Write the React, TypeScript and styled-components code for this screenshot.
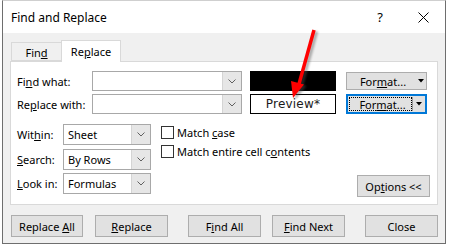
import React from 'react';
import styled, { createGlobalStyle } from 'styled-components';

const GlobalStyle = createGlobalStyle`
    html, body {
        margin: 0;
        padding: 0;
        background: #fff;
    }
    body {
        font-family: "Noto Sans", "Open Sans", sans-serif;
        font-size: 11px;
        color: #000;
    }
`;

const Page = styled.div`
    position: relative;
    width: 451px;
    height: 248px;
`;

const Window = styled.div`
    box-sizing: border-box;
    width: 444px;
    height: 244px;
    margin-left: 2px;
    border: 1px solid #6e6e6e;
    border-top-color: #cfcfcf;
    display: flex;
    flex-direction: column;
    background: #f0f0f0;
`;

const TitleBar = styled.div`
    height: 32px;
    background: #fff;
    display: flex;
    align-items: center;
    padding: 0 16px 0 8px;
`;

const Title = styled.div`
    flex: 1;
    font-size: 12px;
    color: #000;
`;

const TitleButtons = styled.div`
    display: flex;
    align-items: center;
    gap: 35px;
`;

const HelpGlyph = styled.span`
    font-size: 13px;
    line-height: 1;
`;

const Body = styled.div`
    flex: 1;
    display: flex;
    flex-direction: column;
    padding: 7px 7px 6px 7px;
`;

const TabRow = styled.div`
    display: flex;
    align-items: flex-end;
    height: 21px;
    padding-left: 1px;
    position: relative;
    z-index: 1;
`;

const Tab = styled.div<{ $active?: boolean }>`
    box-sizing: border-box;
    height: ${({ $active }) => ($active ? '22px' : '19px')};
    margin-bottom: ${({ $active }) => ($active ? '-1px' : '0')};
    width: ${({ $active }) => ($active ? '60px' : '50px')};
    display: flex;
    align-items: center;
    justify-content: center;
    border: 1px solid #d9d9d9;
    border-bottom: ${({ $active }) => ($active ? 'none' : '1px solid #d9d9d9')};
    border-right: ${({ $active }) => ($active ? '1px solid #d9d9d9' : 'none')};
    background: ${({ $active }) => ($active ? '#fff' : '#f0f0f0')};
    padding-top: ${({ $active }) => ($active ? '0' : '1px')};
`;

const Panel = styled.div`
    box-sizing: border-box;
    height: 144px;
    background: #fff;
    border: 1px solid #d9d9d9;
    padding: 9px 7px 8px 6px;
    display: flex;
    flex-direction: column;
`;

const TopGrid = styled.div`
    display: grid;
    grid-template-columns: 67px 150px 86px 83px;
    grid-template-rows: 20px 20px;
    column-gap: 8px;
    row-gap: 3px;
    align-items: center;
`;

const Label = styled.div`
    white-space: nowrap;
`;

const Key = styled.span`
    text-decoration: underline;
    text-underline-offset: 1px;
`;

const Combo = styled.div`
    box-sizing: border-box;
    height: 100%;
    display: flex;
    border: 1px solid #a8a8a8;
    background: #fff;
`;

const ComboText = styled.div`
    flex: 1;
    display: flex;
    align-items: center;
    padding-left: 4px;
    white-space: nowrap;
`;

const ComboArrow = styled.div`
    width: 18px;
    display: flex;
    align-items: center;
    justify-content: center;
    background: #e6e6e6;
    border-left: 1px solid #d4d4d4;
`;

const Swatch = styled.div`
    height: 20px;
    background: #000;
`;

const Preview = styled.div`
    box-sizing: border-box;
    height: 20px;
    border: 1px solid #000;
    display: flex;
    align-items: center;
    justify-content: center;
    font-family: "DejaVu Sans", "Noto Sans", sans-serif;
    font-size: 12px;
    color: #1a1a1a;
    letter-spacing: 0.2px;
`;

const FormatButton = styled.div<{ $focused?: boolean }>`
    box-sizing: border-box;
    height: ${({ $focused }) => ($focused ? '20px' : '18px')};
    margin-left: 2px;
    display: flex;
    align-items: stretch;
    background: #e1e1e1;
    border: ${({ $focused }) => ($focused ? '2px solid #0078d7' : '1px solid #adadad')};
    padding: ${({ $focused }) => ($focused ? '1px' : '0')};
`;

const FormatLabel = styled.div<{ $focused?: boolean }>`
    flex: 1;
    display: flex;
    align-items: center;
    justify-content: center;
    padding-left: 4px;
    border: ${({ $focused }) => ($focused ? '1px dotted #000' : '1px solid transparent')};
`;

const FormatDrop = styled.div<{ $focused?: boolean }>`
    width: 11px;
    display: flex;
    align-items: center;
    justify-content: center;
    border-left: ${({ $focused }) => ($focused ? '1px solid #9a9a9a' : 'none')};
`;

const LowerSection = styled.div`
    margin-top: 10px;
    display: flex;
    flex: 1;
`;

const SelectGrid = styled.div`
    display: grid;
    grid-template-columns: 46px 88px;
    grid-template-rows: 21px 21px 21px;
    row-gap: 3.5px;
    align-items: center;
`;

const CheckList = styled.div`
    margin-left: 10px;
    padding-top: 2px;
    display: flex;
    flex-direction: column;
    gap: 6px;
`;

const CheckRow = styled.div`
    display: flex;
    align-items: center;
    gap: 3px;
    height: 13px;
    white-space: nowrap;
`;

const CheckBox = styled.div`
    box-sizing: border-box;
    width: 13px;
    height: 13px;
    border: 1px solid #333;
    background: #fff;
`;

const Button = styled.div<{ $width?: number; $gap?: number }>`
    box-sizing: border-box;
    width: ${({ $width }) => ($width ? `${$width}px` : '73px')};
    height: 22px;
    margin-left: ${({ $gap }) => ($gap ? `${$gap}px` : '0')};
    display: flex;
    align-items: center;
    justify-content: center;
    background: #e1e1e1;
    border: 1px solid #adadad;
    white-space: nowrap;
`;

const OptionsButton = styled(Button)`
    margin-left: auto;
    align-self: flex-end;
    margin-bottom: -1px;
`;

const ButtonBar = styled.div`
    display: flex;
    margin-top: 10px;
    padding-left: 1px;
`;

const ArrowLayer = styled.svg`
    position: absolute;
    left: 0;
    top: 0;
    pointer-events: none;
`;

const Chevron = () => (
    <svg width="8" height="5" viewBox="0 0 8 5">
        <path d="M0.5 0.5 L4 4 L7.5 0.5" fill="none" stroke="#606060" strokeWidth="1" />
    </svg>
);

const DropTriangle = () => (
    <svg width="6" height="4" viewBox="0 0 6 4">
        <path d="M0 0 L6 0 L3 3.5 Z" fill="#000" />
    </svg>
);

const CloseIcon = () => (
    <svg width="11" height="11" viewBox="0 0 11 11">
        <path d="M0.5 0.5 L10.5 10.5 M10.5 0.5 L0.5 10.5" stroke="#000" strokeWidth="1" />
    </svg>
);

const SelectBox = ({ value }: { value: string }) => (
    <Combo>
        <ComboText>{value}</ComboText>
        <ComboArrow>
            <Chevron />
        </ComboArrow>
    </Combo>
);

const selects = [
    { label: <>Wit<Key>h</Key>in:</>, value: 'Sheet' },
    { label: <><Key>S</Key>earch:</>, value: 'By Rows' },
    { label: <><Key>L</Key>ook in:</>, value: 'Formulas' },
];

const App = () => {
    return (
        <Page>
            <GlobalStyle />
            <Window>
                <TitleBar>
                    <Title>Find and Replace</Title>
                    <TitleButtons>
                        <HelpGlyph>?</HelpGlyph>
                        <CloseIcon />
                    </TitleButtons>
                </TitleBar>
                <Body>
                    <TabRow>
                        <Tab><span>Fin<Key>d</Key></span></Tab>
                        <Tab $active><span>Re<Key>p</Key>lace</span></Tab>
                    </TabRow>
                    <Panel>
                        <TopGrid>
                            <Label>Fi<Key>n</Key>d what:</Label>
                            <SelectBox value="" />
                            <Swatch />
                            <FormatButton>
                                <FormatLabel><span>For<Key>m</Key>at...</span></FormatLabel>
                                <FormatDrop><DropTriangle /></FormatDrop>
                            </FormatButton>

                            <Label>Re<Key>p</Key>lace with:</Label>
                            <SelectBox value="" />
                            <Preview>Preview*</Preview>
                            <FormatButton $focused>
                                <FormatLabel $focused><span>For<Key>m</Key>at...</span></FormatLabel>
                                <FormatDrop $focused><DropTriangle /></FormatDrop>
                            </FormatButton>
                        </TopGrid>
                        <LowerSection>
                            <SelectGrid>
                                {selects.map((s, i) => (
                                    <React.Fragment key={i}>
                                        <Label>{s.label}</Label>
                                        <SelectBox value={s.value} />
                                    </React.Fragment>
                                ))}
                            </SelectGrid>
                            <CheckList>
                                <CheckRow>
                                    <CheckBox />
                                    <span>Match <Key>c</Key>ase</span>
                                </CheckRow>
                                <CheckRow>
                                    <CheckBox />
                                    <span>Match entire cell c<Key>o</Key>ntents</span>
                                </CheckRow>
                            </CheckList>
                            <OptionsButton><span>Op<Key>t</Key>ions &lt;&lt;</span></OptionsButton>
                        </LowerSection>
                    </Panel>
                    <ButtonBar>
                        <Button $width={72}><span>Replace <Key>A</Key>ll</span></Button>
                        <Button $gap={12}><span><Key>R</Key>eplace</span></Button>
                        <Button $gap={20}><span>F<Key>i</Key>nd All</span></Button>
                        <Button $gap={11}><span><Key>F</Key>ind Next</span></Button>
                        <Button $gap={20}><span>Close</span></Button>
                    </ButtonBar>
                </Body>
            </Window>
            <ArrowLayer width="451" height="248" viewBox="0 0 451 248">
                <defs>
                    <filter id="arrowShadow" x="-50%" y="-50%" width="200%" height="200%">
                        <feGaussianBlur stdDeviation="1.2" />
                    </filter>
                </defs>
                <g transform="translate(2.5 1.5)" opacity="0.45" filter="url(#arrowShadow)">
                    <line x1="314" y1="30" x2="299" y2="84" stroke="#555" strokeWidth="3.5" />
                    <polygon points="293,98 304,84.5 291,81" fill="#555" />
                </g>
                <line x1="314" y1="30" x2="299" y2="84" stroke="#ff0000" strokeWidth="3.5" />
                <polygon points="293,98 304,84.5 291,81" fill="#ff0000" />
            </ArrowLayer>
        </Page>
    );
};

export default App;
